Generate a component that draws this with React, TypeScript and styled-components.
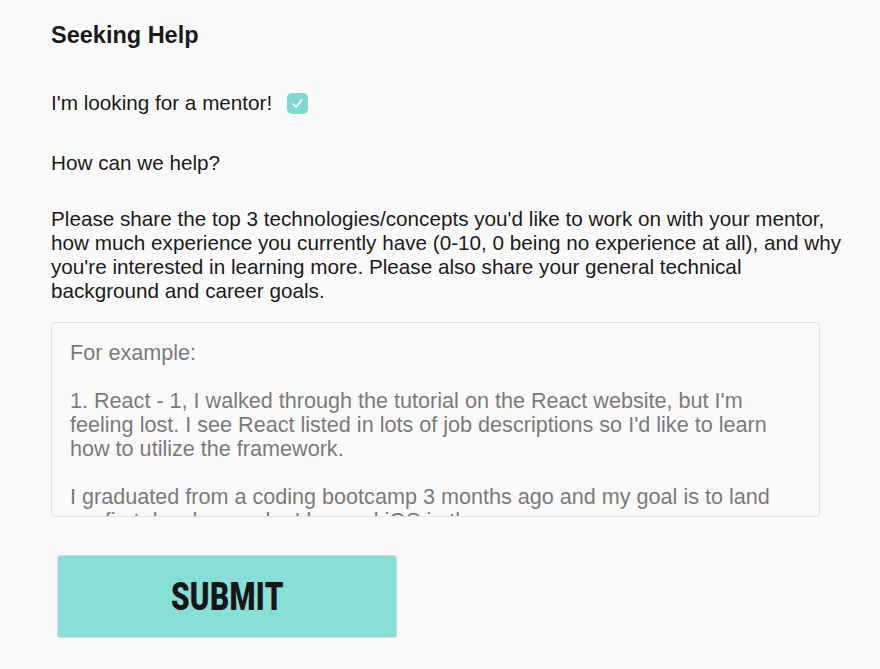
import React from "react";
import styled, { createGlobalStyle } from "styled-components";

const Global = createGlobalStyle`
  html, body { margin: 0; padding: 0; background: #fafafa; }
  body { font-family: "Liberation Sans", Arial, sans-serif; color: #1a1a1a; }
`;

const Page = styled.main`
  padding: 20px 20px 0 51px;
  display: flex;
  flex-direction: column;
`;

const Title = styled.h2`
  margin: 0;
  font-size: 23.5px;
  font-weight: 700;
  line-height: 30px;
`;

const Row = styled.div`
  display: flex;
  align-items: center;
  gap: 15px;
  margin-top: 41px;
  font-size: 20.7px;
  line-height: 24px;
`;

const Check = styled.span`
  width: 21px;
  height: 21px;
  border-radius: 5px;
  background: #7fd8cf;
  display: inline-flex;
  align-items: center;
  justify-content: center;
`;

const Label = styled.p`
  margin: 36px 0 0;
  font-size: 20.7px;
  line-height: 24px;
`;

const Para = styled.p`
  margin: 32px 0 0;
  font-size: 20.7px;
  line-height: 24px;
  max-width: 795px;
`;

const Area = styled.textarea`
  margin-top: 19px;
  width: 769px;
  height: 195px;
  box-sizing: border-box;
  border: 1px solid #e3e3e3;
  border-radius: 4px;
  background: #fafafa;
  padding: 18px 18px;
  font-family: "Liberation Sans", Arial, sans-serif;
  font-size: 21.6px;
  line-height: 24px;
  color: #777;
  resize: none;
  overflow: hidden;
  outline: none;
  &::placeholder { color: #7a7a7a; }
`;

const Submit = styled.button`
  margin: 38px 0 0 6px;
  width: 340px;
  height: 83px;
  background: #87dfd6;
  border: 1px solid #d9d9d9;
  border-radius: 3px;
  display: flex;
  align-items: center;
  justify-content: center;
  cursor: pointer;
`;

const SubmitText = styled.span`
  font-family: Roboto, "Liberation Sans", sans-serif;
  font-weight: 900;
  font-size: 38px;
  color: #161616;
  display: inline-block;
  transform: scaleX(0.78);
  letter-spacing: 0.5px;
`;

const placeholder = `For example:

1. React - 1, I walked through the tutorial on the React website, but I'm feeling lost. I see React listed in lots of job descriptions so I'd like to learn how to utilize the framework.

I graduated from a coding bootcamp 3 months ago and my goal is to land my first developer role. I learned iOS in the program.`;

export default function App() {
  return (
    <>
      <Global />
      <Page>
        <Title>Seeking Help</Title>
        <Row>
          <span>I'm looking for a mentor!</span>
          <Check>
            <svg width="13" height="13" viewBox="0 0 13 13">
              <path d="M2 7 L5.2 10 L11 2.5" fill="none" stroke="#fff" strokeWidth="1.6" strokeLinecap="round" strokeLinejoin="round" />
            </svg>
          </Check>
        </Row>
        <Label>How can we help?</Label>
        <Para>
          Please share the top 3 technologies/concepts you'd like to work on with your mentor, how much experience you currently have (0-10, 0 being no experience at all), and why you're interested in learning more. Please also share your general technical background and career goals.
        </Para>
        <Area placeholder={placeholder} />
        <Submit>
          <SubmitText>SUBMIT</SubmitText>
        </Submit>
      </Page>
    </>
  );
}
